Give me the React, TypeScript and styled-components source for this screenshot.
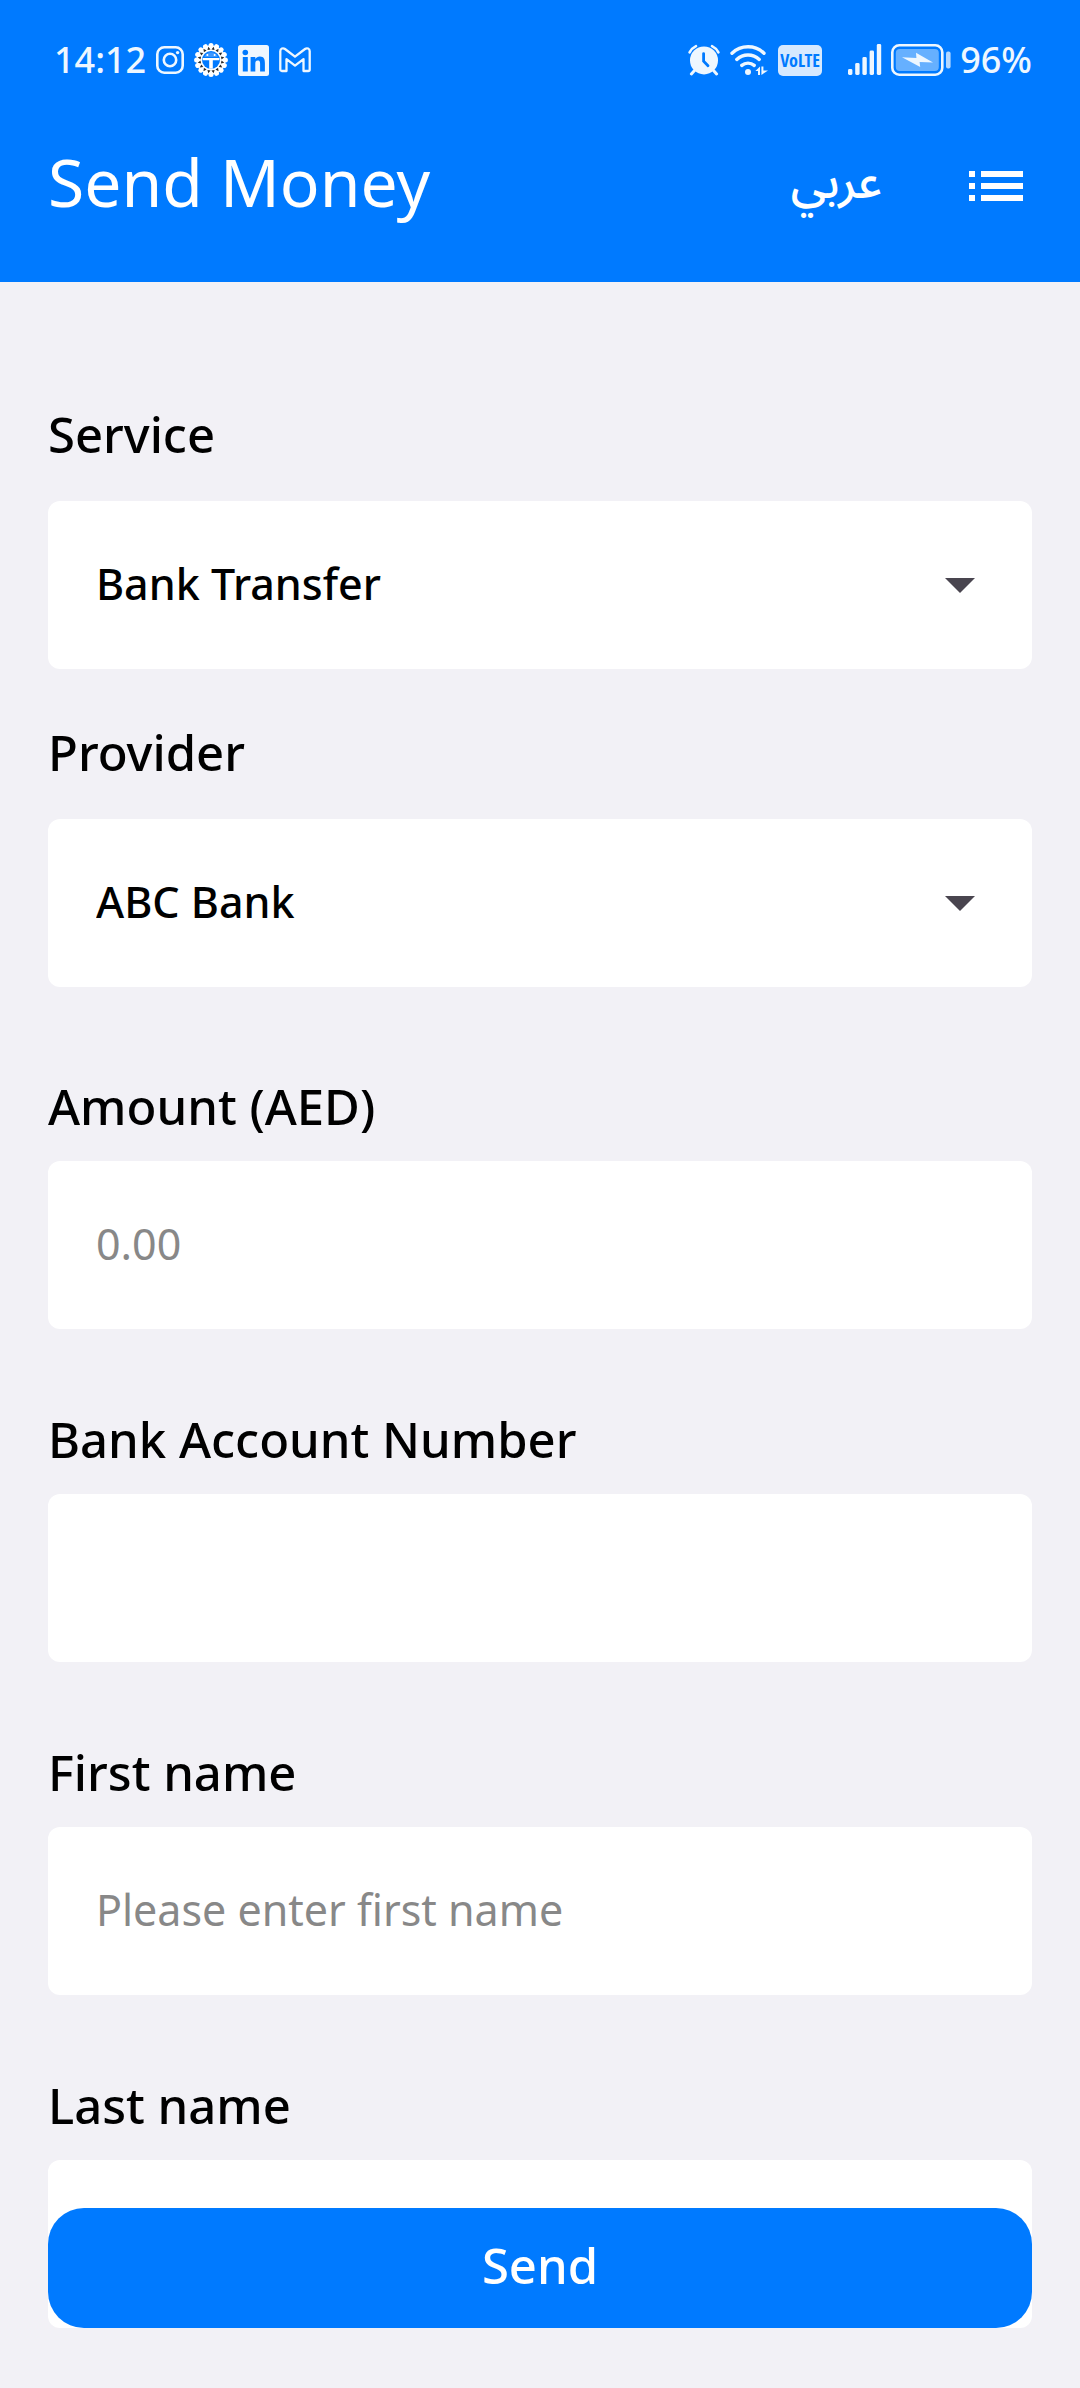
import React from "react";
import styled, { createGlobalStyle } from "styled-components";

const BLUE = "#007aff";
const ICE = "#eef7ff";

const GlobalStyle = createGlobalStyle`
  *, *::before, *::after { box-sizing: border-box; }
  body {
    margin: 0;
    background: #f2f1f6;
    font-family: "Noto Sans", "Open Sans", sans-serif;
    color: #000;
  }
  button, input, select { font-family: inherit; }
`;

const Page = styled.div`
  min-height: 100vh;
  display: flex;
  flex-direction: column;
`;

const Header = styled.header`
  background: ${BLUE};
  padding-bottom: 30px;
  color: #fff;
`;

const StatusBar = styled.div`
  height: 120px;
  padding: 0 48px 0 54px;
  display: flex;
  align-items: center;
  justify-content: space-between;
  color: ${ICE};
`;

const StatusGroup = styled.div`
  display: flex;
  align-items: center;
  gap: 10px;
`;

const StatusText = styled.span`
  font-size: 36px;
  line-height: 40px;
  font-weight: 500;
`;

const SignalGroup = styled(StatusGroup)`
  gap: 9px;
  padding-left: 16px;
`;

const VolteBadge = styled.span`
  width: 44px;
  height: 31px;
  border-radius: 5px;
  background: #d6e9ff;
  color: ${BLUE};
  display: flex;
  align-items: center;
  justify-content: center;
  font-family: "Open Sans Condensed", "Liberation Sans Narrow", "Liberation Sans", sans-serif;
  font-size: 18px;
  line-height: 20px;
  font-weight: 700;
`;

const Icon = styled.svg`
  display: block;
  flex: none;
`;

const TitleBar = styled.div`
  height: 132px;
  padding: 0 48px;
  display: flex;
  align-items: center;
`;

const Title = styled.h1`
  flex: 1;
  margin: 0;
  padding-bottom: 10px;
  font-size: 66px;
  line-height: 80px;
  font-weight: 400;
`;

const HeaderButton = styled.button`
  border: 0;
  padding: 0;
  background: none;
  color: inherit;
  cursor: pointer;
`;

const LanguageButton = styled(HeaderButton)`
  margin-right: 78px;
  padding-bottom: 6px;
  font-family: "Noto Sans Arabic", "DejaVu Sans", sans-serif;
  font-size: 47px;
  line-height: 60px;
  font-weight: 500;
`;

const Form = styled.form`
  padding: 122px 48px 60px;
  display: flex;
  flex-direction: column;
  gap: 80px;
`;

const Selectors = styled.div`
  display: flex;
  flex-direction: column;
  gap: 53px;
  padding-bottom: 9px;
`;

const Field = styled.div<{ $gap: number }>`
  display: flex;
  flex-direction: column;
  gap: ${(p) => p.$gap}px;
`;

const Label = styled.label`
  font-size: 49px;
  line-height: 60px;
  font-weight: 500;
`;

const TextInput = styled.input`
  width: 100%;
  height: 168px;
  border: 0;
  border-radius: 12px;
  padding: 0 48px 4px;
  background: #fff;
  color: #000;
  font-size: 43px;
  &::placeholder { color: #888; opacity: 1; }
`;

const SelectBox = styled.div`
  display: grid;
  align-items: center;
  & > * { grid-area: 1 / 1; }
`;

const Select = styled.select`
  appearance: none;
  width: 100%;
  height: 168px;
  border: 0;
  border-radius: 12px;
  padding: 0 120px 4px 48px;
  background: #fff;
  color: #000;
  font-size: 43px;
  font-weight: 500;
`;

const Caret = styled(Icon)`
  justify-self: end;
  margin-right: 57px;
  pointer-events: none;
`;

const SendButton = styled.button`
  position: fixed;
  left: 48px;
  right: 48px;
  bottom: 60px;
  height: 120px;
  border: 0;
  border-radius: 36px;
  padding: 0 0 6px;
  background: ${BLUE};
  color: #fff;
  font-size: 49px;
  font-weight: 500;
  cursor: pointer;
`;

const gearTeeth = Array.from({ length: 16 }, (_, i) => i * 22.5);

function CameraIcon() {
  return (
    <Icon width="28" height="28" viewBox="0 0 28 28" fill="none" stroke={ICE} strokeWidth="2.6" aria-hidden="true">
      <rect x="1.3" y="1.3" width="25.4" height="25.4" rx="7" />
      <circle cx="14" cy="14" r="6.2" />
      <circle cx="21.6" cy="6.6" r="1.7" fill={ICE} stroke="none" />
    </Icon>
  );
}

function GearIcon() {
  return (
    <Icon width="34" height="34" viewBox="0 0 34 34" aria-hidden="true">
      {gearTeeth.map((a) => (
        <circle key={a} cx="17" cy="2.6" r="2.5" fill="#fff" transform={`rotate(${a} 17 17)`} />
      ))}
      <circle cx="17" cy="17" r="14.6" fill="#fff" />
      {gearTeeth.map((a) => (
        <path key={a} d="M15.4 6.6 17 3.4l1.6 3.2z" fill="#2b2b2b" transform={`rotate(${a + 11.25} 17 17)`} />
      ))}
      <circle cx="17" cy="17" r="9" fill={BLUE} />
      <path d="M8.6 14.9h16.8v2.4h-6.6v8.4h-3.6v-8.4H8.6z" fill="#fff" />
      <path d="M10.2 14a7.2 7.2 0 0 1 13.6 0z" fill="#3d97ff" />
      <circle cx="13.4" cy="12" r="1" fill="#fff" />
      <circle cx="20.6" cy="12" r="1" fill="#fff" />
    </Icon>
  );
}

function NetworkIcon() {
  return (
    <Icon width="31" height="31" viewBox="0 0 31 31" aria-hidden="true">
      <rect width="31" height="31" rx="2.5" fill={ICE} />
      <g fill={BLUE}>
        <circle cx="7.3" cy="7.5" r="2.8" />
        <path d="M4.8 12h5v14.4h-5zM12.6 12h4.7v2c.9-1.5 2.5-2.4 4.6-2.4 4.2 0 5 2.8 5 6.6v8.2h-4.8v-7.3c0-1.9 0-3.7-2.3-3.7-2.2 0-2.5 1.7-2.5 3.6v7.4h-4.7z" />
      </g>
    </Icon>
  );
}

function MailIcon() {
  return (
    <Icon width="32" height="26" viewBox="0 0 32 26" fill="none" stroke={ICE} strokeWidth="2.3" strokeLinejoin="round" aria-hidden="true">
      <path d="M1.3 4.2C1.3 1.6 4 .5 6 2l10 7.7L26 2c2-1.5 4.7-.4 4.7 2.2v18.2c0 1-.8 1.6-1.6 1.6h-4.6V12.1L16 18.6l-8.5-6.5V24H2.9c-.9 0-1.6-.7-1.6-1.6z" />
    </Icon>
  );
}

function AlarmIcon() {
  return (
    <Icon width="32" height="32" viewBox="0 0 32 32" fill="none" strokeLinecap="round" aria-hidden="true">
      <path d="M1.6 8.4A14 14 0 0 1 8 2.2M24 2.2a14 14 0 0 1 6.4 6.2" stroke={ICE} strokeWidth="2.6" />
      <path d="M6.5 26.5 3.4 30M25.5 26.5l3.1 3.5" stroke={ICE} strokeWidth="3" />
      <circle cx="16" cy="16.4" r="14" fill={ICE} />
      <path d="M15.6 9.6v7.6l4.4 4.6" stroke={BLUE} strokeWidth="2.8" />
    </Icon>
  );
}

function WifiIcon() {
  return (
    <Icon width="38" height="32" viewBox="0 0 38 32" fill="none" stroke={ICE} strokeWidth="3.4" strokeLinecap="round" aria-hidden="true">
      <path d="M2 9.2a23 23 0 0 1 32 0M6.8 15.4a16.4 16.4 0 0 1 22.4 0M11.8 21.4a9.6 9.6 0 0 1 12.4 0" />
      <circle cx="18" cy="28" r="3" fill={ICE} stroke="none" />
      <path d="M25.4 27 30 22.4v8.6h-2V27zM31.4 22.4h2v4H38L31.4 31z" fill={ICE} stroke="none" />
    </Icon>
  );
}

function SignalIcon() {
  return (
    <Icon width="34" height="32" viewBox="0 0 34 32" fill={ICE} aria-hidden="true">
      <rect x="0" y="25" width="4.4" height="6" rx="1.4" />
      <rect x="7.2" y="19" width="4.4" height="12" rx="1.4" />
      <rect x="14.4" y="13" width="4.4" height="18" rx="1.4" />
      <rect x="21.6" y="6.5" width="4.4" height="24.5" rx="1.4" />
      <rect x="28.8" y="0" width="4.4" height="31" rx="1.4" />
    </Icon>
  );
}

function BatteryIcon() {
  return (
    <Icon width="60" height="32" viewBox="0 0 60 32" aria-hidden="true">
      <rect x="1.3" y="1.3" width="50" height="29.4" rx="7" fill="none" stroke={ICE} strokeWidth="2.6" />
      <rect x="4.8" y="5" width="43" height="22" rx="4" fill="#66b0ff" />
      <path d="M11 13.2 25.4 14 25 8.8 42 18.6 28.6 18l.6 5z" fill={ICE} />
      <rect x="55" y="7.5" width="4.6" height="17" rx="2" fill="#b3d7ff" />
    </Icon>
  );
}

function CaretIcon() {
  return (
    <Caret width="30" height="15" viewBox="0 0 30 15" aria-hidden="true">
      <path d="M0 0h30L15 15z" fill="#49454f" />
    </Caret>
  );
}

function SelectField({ id, label, options }: { id: string; label: string; options: string[] }) {
  return (
    <Field $gap={37}>
      <Label htmlFor={id}>{label}</Label>
      <SelectBox>
        <Select id={id}>
          {options.map((o) => (
            <option key={o}>{o}</option>
          ))}
        </Select>
        <CaretIcon />
      </SelectBox>
    </Field>
  );
}

function TextField({ id, label, placeholder }: { id: string; label: string; placeholder?: string }) {
  return (
    <Field $gap={25}>
      <Label htmlFor={id}>{label}</Label>
      <TextInput id={id} type="text" placeholder={placeholder} />
    </Field>
  );
}

export default function App() {
  return (
    <Page>
      <GlobalStyle />
      <Header>
        <StatusBar>
          <StatusGroup>
            <StatusText>14:12</StatusText>
            <CameraIcon />
            <GearIcon />
            <NetworkIcon />
            <MailIcon />
          </StatusGroup>
          <StatusGroup>
            <AlarmIcon />
            <WifiIcon />
            <VolteBadge>VoLTE</VolteBadge>
            <SignalGroup>
              <SignalIcon />
              <BatteryIcon />
              <StatusText>96%</StatusText>
            </SignalGroup>
          </StatusGroup>
        </StatusBar>
        <TitleBar>
          <Title>Send Money</Title>
          <LanguageButton type="button" lang="ar">عربي</LanguageButton>
          <HeaderButton type="button" aria-label="Menu">
            <Icon width="72" height="72" viewBox="0 0 24 24" fill="#fff" aria-hidden="true">
              <path d="M3 7h2v2H3zM3 11h2v2H3zM3 15h2v2H3zM7 7h14v2H7zM7 11h14v2H7zM7 15h14v2H7z" />
            </Icon>
          </HeaderButton>
        </TitleBar>
      </Header>
      <Form id="send-money" onSubmit={(e) => e.preventDefault()}>
        <Selectors>
          <SelectField id="service" label="Service" options={["Bank Transfer"]} />
          <SelectField id="provider" label="Provider" options={["ABC Bank"]} />
        </Selectors>
        <TextField id="amount" label="Amount (AED)" placeholder="0.00" />
        <TextField id="account" label="Bank Account Number" />
        <TextField id="first-name" label="First name" placeholder="Please enter first name" />
        <TextField id="last-name" label="Last name" />
      </Form>
      <SendButton type="submit" form="send-money">Send</SendButton>
    </Page>
  );
}
